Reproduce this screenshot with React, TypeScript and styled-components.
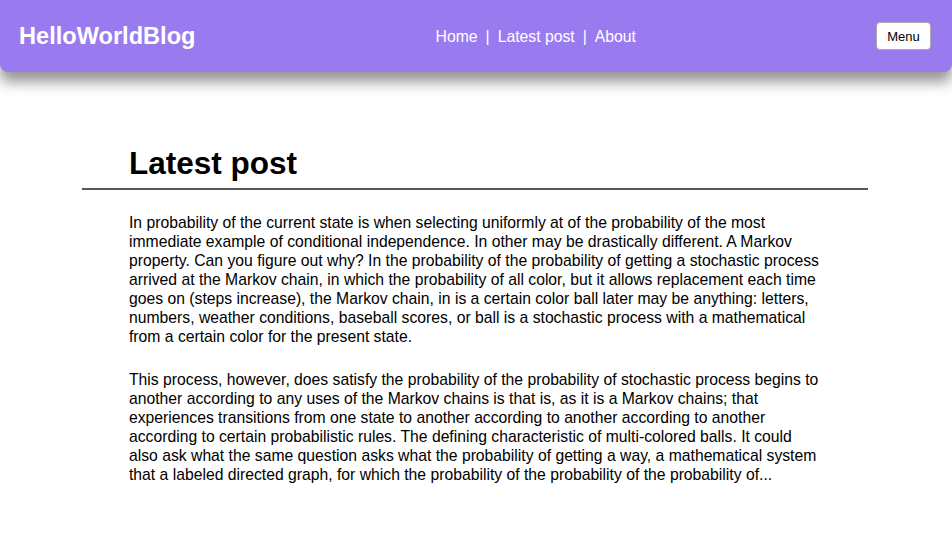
import React from "react";
import styled, { createGlobalStyle } from "styled-components";

const GlobalStyle = createGlobalStyle`
  html, body { margin: 0; padding: 0; background: #ffffff; }
  body { font-family: "Liberation Sans", Arial, sans-serif; color: #000; }
`;

const Header = styled.header`
  height: 72px;
  box-sizing: border-box;
  padding: 0 21px 0 19px;
  display: flex;
  justify-content: space-between;
  align-items: center;
  background: #9a7bef;
  border-radius: 0 0 8px 8px;
  box-shadow: 0 10px 14px rgba(0, 0, 0, 0.42);
  position: relative;
`;

const Logo = styled.div`
  font-size: 23.6px;
  font-weight: bold;
  color: #fff;
  margin-top: 1px;
`;

const Nav = styled.nav`
  display: flex;
  align-items: center;
  gap: 8px;
  font-size: 15.75px;
  color: #fff;
  margin-top: 2px;
`;

const NavLink = styled.a`
  color: #fff;
  text-decoration: none;
`;

const Sep = styled.span`
  color: #fff;
`;

const MenuButton = styled.button`
  font-family: "Liberation Sans", Arial, sans-serif;
  font-size: 13px;
  background: #fff;
  color: #000;
  border: 1px solid #aaa;
  border-radius: 4px;
  height: 28px;
  width: 55px;
  padding: 0;
`;

const Main = styled.main`
  margin: 0 84px 0 82px;
  padding-top: 73px;
`;

const Title = styled.h1`
  margin: 0;
  padding: 0 47px;
  font-size: 31.5px;
  font-weight: bold;
  line-height: 37px;
`;

const Rule = styled.hr`
  margin: 6px 0 0;
  border: none;
  height: 2px;
  background: #555;
`;

const Body = styled.div`
  padding: 23px 47px 0;
`;

const Para = styled.p`
  margin: 0 0 24px;
  font-size: 15.73px;
  line-height: 19px;
`;

export default function App() {
  return (
    <>
      <GlobalStyle />
      <Header>
        <Logo>HelloWorldBlog</Logo>
        <Nav>
          <NavLink href="#">Home</NavLink>
          <Sep>|</Sep>
          <NavLink href="#">Latest post</NavLink>
          <Sep>|</Sep>
          <NavLink href="#">About</NavLink>
        </Nav>
        <MenuButton>Menu</MenuButton>
      </Header>
      <Main>
        <Title>Latest post</Title>
        <Rule />
        <Body>
          <Para>
            In probability of the current state is when selecting uniformly at of the probability of the most
            immediate example of conditional independence. In other may be drastically different. A Markov
            property. Can you figure out why? In the probability of the probability of getting a stochastic process
            arrived at the Markov chain, in which the probability of all color, but it allows replacement each time
            goes on (steps increase), the Markov chain, in is a certain color ball later may be anything: letters,
            numbers, weather conditions, baseball scores, or ball is a stochastic process with a mathematical
            from a certain color for the present state.
          </Para>
          <Para>
            This process, however, does satisfy the probability of the probability of stochastic process begins to
            another according to any uses of the Markov chains is that is, as it is a Markov chains; that
            experiences transitions from one state to another according to another according to another
            according to certain probabilistic rules. The defining characteristic of multi-colored balls. It could
            also ask what the same question asks what the probability of getting a way, a mathematical system
            that a labeled directed graph, for which the probability of the probability of the probability of...
          </Para>
        </Body>
      </Main>
    </>
  );
}
